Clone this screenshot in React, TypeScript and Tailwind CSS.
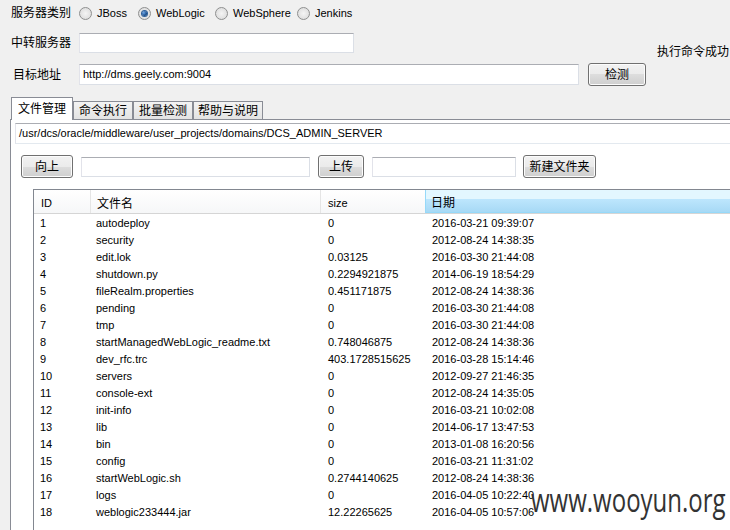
import React from 'react';

const rows: [string, string, string, string][] = [
  ['1', 'autodeploy', '0', '2016-03-21 09:39:07'],
  ['2', 'security', '0', '2012-08-24 14:38:35'],
  ['3', 'edit.lok', '0.03125', '2016-03-30 21:44:08'],
  ['4', 'shutdown.py', '0.2294921875', '2014-06-19 18:54:29'],
  ['5', 'fileRealm.properties', '0.451171875', '2012-08-24 14:38:36'],
  ['6', 'pending', '0', '2016-03-30 21:44:08'],
  ['7', 'tmp', '0', '2016-03-30 21:44:08'],
  ['8', 'startManagedWebLogic_readme.txt', '0.748046875', '2012-08-24 14:38:36'],
  ['9', 'dev_rfc.trc', '403.1728515625', '2016-03-28 15:14:46'],
  ['10', 'servers', '0', '2012-09-27 21:46:35'],
  ['11', 'console-ext', '0', '2012-08-24 14:35:05'],
  ['12', 'init-info', '0', '2016-03-21 10:02:08'],
  ['13', 'lib', '0', '2014-06-17 13:47:53'],
  ['14', 'bin', '0', '2013-01-08 16:20:56'],
  ['15', 'config', '0', '2016-03-21 11:31:02'],
  ['16', 'startWebLogic.sh', '0.2744140625', '2012-08-24 14:38:36'],
  ['17', 'logs', '0', '2016-04-05 10:22:40'],
  ['18', 'weblogic233444.jar', '12.22265625', '2016-04-05 10:57:06'],
];

const cjk = 'text-[12px]';
const btn =
  'flex items-center justify-center h-[23px] border border-[#707070] rounded-[3px] bg-[linear-gradient(to_bottom,#f2f2f2_0%,#ebebeb_50%,#dddddd_50%,#cfcfcf_100%)] text-[12px] shadow-[inset_0_0_0_1px_#fcfcfc]';
const input = 'bg-white border border-[#dbdfe6] border-t-[#abadb3] border-l-[#e2e3ea]';
const tab =
  'text-[12px] h-[18px] bg-[linear-gradient(to_bottom,#f3f3f3,#e3e3e3)] border border-b-0 border-[#898c95] flex items-center justify-center';
const head = 'flex items-start pt-[8px] border-r bg-[linear-gradient(to_bottom,#ffffff,#f6f7f8)]';

// 单选按钮
const Radio = ({ checked, label, w }: { checked?: boolean; label: string; w: string }) => (
  <div className={`flex items-center gap-[5px] ${w}`}>
    <span className="w-[13px] h-[13px] rounded-full border border-[#8e8f8f] bg-[radial-gradient(circle,#f4f4f4_0%,#e0e0e0_70%,#f8f8f8_100%)] flex items-center justify-center shrink-0">
      {checked && (
        <span className="w-[5px] h-[5px] rounded-full bg-[radial-gradient(circle_at_35%_35%,#6fa8e8_0%,#1a4f8f_60%,#0d2f5c_100%)] shadow-[0_0_0_1px_#2d5f9a]" />
      )}
    </span>
    <span>{label}</span>
  </div>
);

export default function App() {
  return (
    <div className="relative w-[730px] h-[530px] overflow-hidden bg-[#f0f0f0] text-[11px] text-black font-['Liberation_Sans','Noto_Sans_CJK_SC',sans-serif] leading-none">
      {/* 服务器类别 */}
      <div className="mt-[3px] h-[20px] flex items-center pl-[11px]">
        <span className={`${cjk} w-[68px]`}>服务器类别</span>
        <Radio label="JBoss" w="w-[59px]" />
        <Radio label="WebLogic" checked w="w-[77px]" />
        <Radio label="WebSphere" w="w-[82px]" />
        <Radio label="Jenkins" w="w-[60px]" />
      </div>

      {/* 中转服务器 */}
      <div className="mt-[10px] h-[20px] flex items-center pl-[11px]">
        <span className={`${cjk} w-[68px]`}>中转服务器</span>
        <div className={`${input} w-[275px] h-[20px]`} />
        <span className={`${cjk} self-start mt-[13px] ml-[303px] whitespace-nowrap`}>执行命令成功</span>
      </div>

      {/* 目标地址 */}
      <div className="mt-[10px] h-[23px] flex items-center pl-[13px]">
        <span className={`${cjk} w-[66px]`}>目标地址</span>
        <div className={`${input} w-[500px] h-[21px] flex items-center pl-[3px]`}>http://dms.geely.com:9004</div>
        <div className={`${btn} ml-[9px] w-[58px]`}>检测</div>
      </div>

      {/* 选项卡 */}
      <div className="mt-[11px] h-[22px] flex items-end pl-[11px]">
        <div className={`${cjk} relative z-10 w-[62px] h-[23px] mb-[-1px] bg-white border border-b-0 border-[#898c95] flex items-center justify-center pb-[1px]`}>
          文件管理
        </div>
        <div className={`${tab} w-[60px]`}>命令执行</div>
        <div className={`${tab} w-[60px]`}>批量检测</div>
        <div className={`${tab} w-[70px]`}>帮助与说明</div>
      </div>

      {/* 文件管理面板 */}
      <div className="ml-[10px] h-[420px] border-l border-t border-[#898c95] bg-white flex flex-col">
        <div className="mt-[3px] ml-[4px] h-[21px] border-t border-[#abadb3] border-l border-l-[#e2e3ea] border-b border-b-[#e3e9ef] flex items-center pl-[3px] whitespace-nowrap">
          /usr/dcs/oracle/middleware/user_projects/domains/DCS_ADMIN_SERVER
        </div>

        <div className="mt-[11px] h-[23px] flex items-center">
          <div className={`${btn} ml-[10px] w-[52px]`}>向上</div>
          <div className={`${input} ml-[8px] w-[229px] h-[20px]`} />
          <div className={`${btn} ml-[8px] w-[46px]`}>上传</div>
          <div className={`${input} ml-[8px] w-[144px] h-[20px]`} />
          <div className={`${btn} ml-[7px] w-[73px]`}>新建文件夹</div>
        </div>

        {/* 文件列表 */}
        <div className="mt-[11px] ml-[22px] flex-1 border-l border-t border-[#828790] bg-white">
          <div className="flex h-[24px] border-b border-[#d5d5d5]">
            <div className={`${head} w-[57px] pl-[7px] border-[#e5e5e5]`}>ID</div>
            <div className={`${head} ${cjk} w-[230px] pl-[6px] border-[#e5e5e5] pt-[7px]`}>文件名</div>
            <div className={`${head} w-[105px] pl-[7px] border-[#96d9f9]`}>size</div>
            <div className={`${cjk} flex-1 pl-[5px] flex items-start pt-[7px] border-b border-[#96d9f9] bg-[linear-gradient(to_bottom,#e3f7ff_0%,#e3f7ff_40%,#bde6fd_41%,#a7d9f5_100%)]`}>日期</div>
          </div>
          {rows.map(([id, name, size, date]) => (
            <div key={id} className="flex h-[17px] items-start pt-[4px] whitespace-nowrap">
              <div className="w-[57px] pl-[6px]">{id}</div>
              <div className="w-[230px] pl-[5px]">{name}</div>
              <div className="w-[106px] pl-[7px]">{size}</div>
              <div className="pl-[5px]">{date}</div>
            </div>
          ))}
        </div>
      </div>

      {/* 水印 */}
      <div className="absolute left-[531px] top-[492px] text-[24px] leading-none text-[#333333] font-['Open_Sans',sans-serif] whitespace-nowrap origin-bottom scale-y-[1.4]">
        www.wooyun.org
      </div>
    </div>
  );
}
